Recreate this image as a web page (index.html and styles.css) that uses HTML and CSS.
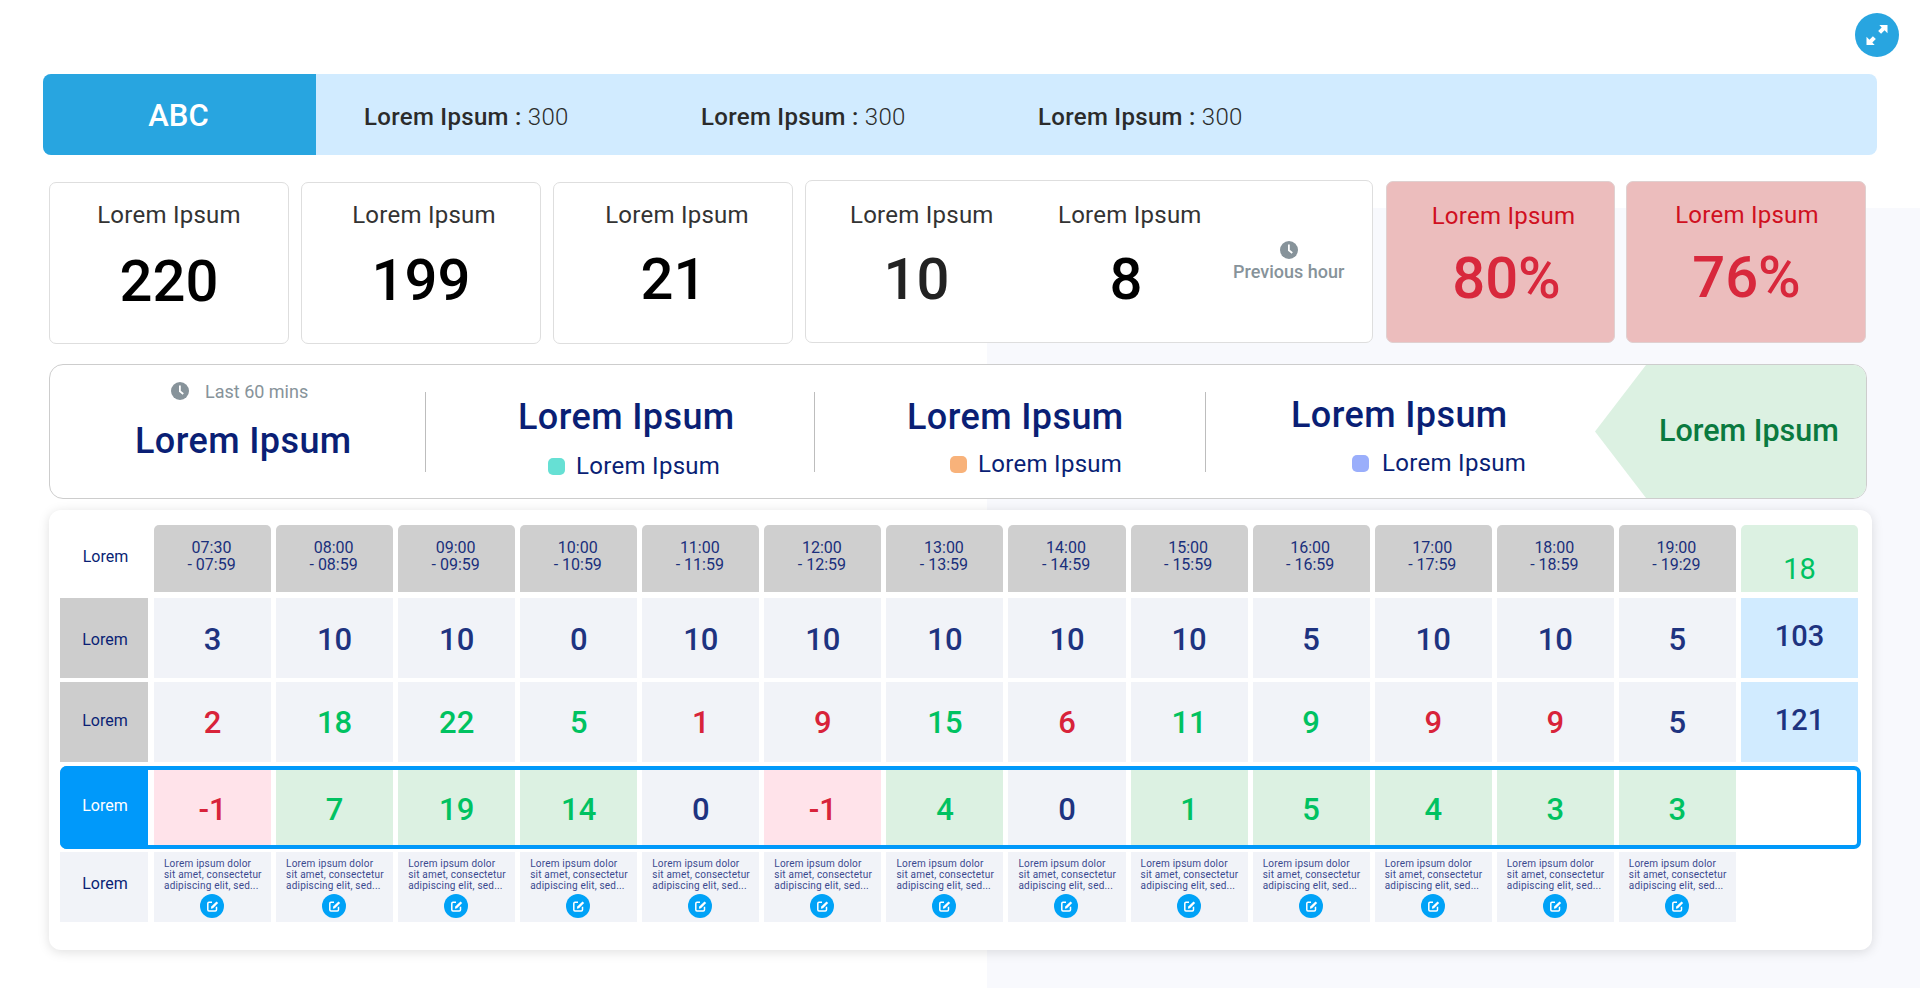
FILE: index.html
```html
<!DOCTYPE html>
<html lang="en">
<head>
<meta charset="utf-8">
<title>Dashboard</title>
<link rel="stylesheet" href="styles.css">
</head>
<body>
<svg class="defs" width="0" height="0" aria-hidden="true">
  <symbol id="clock" viewBox="0 0 16 16">
    <circle cx="8" cy="8" r="8" fill="#87939a"/>
    <path d="M7.9 3.2v5.1l3 2.3" fill="none" stroke="#fff" stroke-width="1.6"/>
  </symbol>
  <symbol id="edit" viewBox="0 0 24 24">
    <path d="M12 8.300H9a1.200 1.200 0 0 0-1.200 1.200v6.300A1.200 1.200 0 0 0 9 17h6.300a1.200 1.200 0 0 0 1.200-1.200v-3" fill="none" stroke="#fff" stroke-width="1.500"/>
    <path d="M11.300 12.600l5.200-5.200 1.700 1.700-5.200 5.200-2.100.4z" fill="#fff"/>
  </symbol>
</svg>
<button class="expand" type="button" aria-label="Expand">
  <svg viewBox="0 0 24 24" width="28" height="28"><path d="M14 3.500h7v7l-2.500-2.500-3 3-2.500-2.500 3-3zM10 20.500H3v-7l2.500 2.500 3-3 2.500 2.500-3 3z" fill="#fff"/></svg>
</button>
<main class="page">
  <header class="topbar">
    <div class="brand">ABC</div>
    <div class="stats">
      <p class="stat"><b>Lorem Ipsum :</b> 300</p>
      <p class="stat"><b>Lorem Ipsum :</b> 300</p>
      <p class="stat"><b>Lorem Ipsum :</b> 300</p>
    </div>
  </header>

  <section class="cards">
    <div class="card c1"><div class="lbl">Lorem Ipsum</div><div class="num">220</div></div>
    <div class="card c2"><div class="lbl">Lorem Ipsum</div><div class="num">199</div></div>
    <div class="card c3"><div class="lbl">Lorem Ipsum</div><div class="num">21</div></div>
    <div class="card wide">
      <div class="pair p1"><div class="lbl">Lorem Ipsum</div><div class="num dark">10</div></div>
      <div class="pair p2"><div class="lbl">Lorem Ipsum</div><div class="num">8</div></div>
      <div class="prev"><svg class="clk"><use href="#clock"/></svg><span>Previous hour</span></div>
    </div>
    <div class="card alert a1"><div class="lbl">Lorem Ipsum</div><div class="num">80%</div></div>
    <div class="card alert a2"><div class="lbl">Lorem Ipsum</div><div class="num">76%</div></div>
  </section>

  <section class="panel">
    <div class="seg s1">
      <div class="meta"><svg class="clk"><use href="#clock"/></svg><span>Last 60 mins</span></div>
      <div class="title">Lorem Ipsum</div>
    </div>
    <i class="rule"></i>
    <div class="seg s2">
      <div class="title">Lorem Ipsum</div>
      <div class="sub"><i class="dot teal"></i>Lorem Ipsum</div>
    </div>
    <i class="rule"></i>
    <div class="seg s3">
      <div class="title">Lorem Ipsum</div>
      <div class="sub"><i class="dot orange"></i>Lorem Ipsum</div>
    </div>
    <i class="rule"></i>
    <div class="seg s4">
      <div class="title">Lorem Ipsum</div>
      <div class="sub"><i class="dot blue"></i>Lorem Ipsum</div>
    </div>
    <div class="flag">Lorem Ipsum</div>
  </section>

  <section class="board">
    <div class="row r0">
      <div class="head-l">Lorem</div>
      <div class="time">07:30<br>- 07:59</div>
      <div class="time">08:00<br>- 08:59</div>
      <div class="time">09:00<br>- 09:59</div>
      <div class="time">10:00<br>- 10:59</div>
      <div class="time">11:00<br>- 11:59</div>
      <div class="time">12:00<br>- 12:59</div>
      <div class="time">13:00<br>- 13:59</div>
      <div class="time">14:00<br>- 14:59</div>
      <div class="time">15:00<br>- 15:59</div>
      <div class="time">16:00<br>- 16:59</div>
      <div class="time">17:00<br>- 17:59</div>
      <div class="time">18:00<br>- 18:59</div>
      <div class="time">19:00<br>- 19:29</div>
      <div class="tot-g">18</div>
    </div>
    <div class="row r1">
      <div class="side">Lorem</div>
      <div class="v">3</div><div class="v">10</div><div class="v">10</div><div class="v">0</div><div class="v">10</div><div class="v">10</div><div class="v">10</div><div class="v">10</div><div class="v">10</div><div class="v">5</div><div class="v">10</div><div class="v">10</div><div class="v">5</div>
      <div class="tot">103</div>
    </div>
    <div class="row r2">
      <div class="side">Lorem</div>
      <div class="v red">2</div><div class="v grn">18</div><div class="v grn">22</div><div class="v grn">5</div><div class="v red">1</div><div class="v red">9</div><div class="v grn">15</div><div class="v red">6</div><div class="v grn">11</div><div class="v grn">9</div><div class="v red">9</div><div class="v red">9</div><div class="v">5</div>
      <div class="tot">121</div>
    </div>
    <div class="row r3">
      <div class="side hot">Lorem</div>
      <div class="v red neg">-1</div><div class="v grn pos">7</div><div class="v grn pos">19</div><div class="v grn pos">14</div><div class="v">0</div><div class="v red neg">-1</div><div class="v grn pos">4</div><div class="v">0</div><div class="v grn pos">1</div><div class="v grn pos">5</div><div class="v grn pos">4</div><div class="v grn pos">3</div><div class="v grn pos">3</div>
      <div class="blank"></div>
    </div>
    <div class="row r4">
      <div class="side pale">Lorem</div>
      <div class="note"><p>Lorem ipsum dolor<br>sit amet, consectetur<br>adipiscing elit, sed...</p><span class="pen"><svg><use href="#edit"/></svg></span></div>
      <div class="note"><p>Lorem ipsum dolor<br>sit amet, consectetur<br>adipiscing elit, sed...</p><span class="pen"><svg><use href="#edit"/></svg></span></div>
      <div class="note"><p>Lorem ipsum dolor<br>sit amet, consectetur<br>adipiscing elit, sed...</p><span class="pen"><svg><use href="#edit"/></svg></span></div>
      <div class="note"><p>Lorem ipsum dolor<br>sit amet, consectetur<br>adipiscing elit, sed...</p><span class="pen"><svg><use href="#edit"/></svg></span></div>
      <div class="note"><p>Lorem ipsum dolor<br>sit amet, consectetur<br>adipiscing elit, sed...</p><span class="pen"><svg><use href="#edit"/></svg></span></div>
      <div class="note"><p>Lorem ipsum dolor<br>sit amet, consectetur<br>adipiscing elit, sed...</p><span class="pen"><svg><use href="#edit"/></svg></span></div>
      <div class="note"><p>Lorem ipsum dolor<br>sit amet, consectetur<br>adipiscing elit, sed...</p><span class="pen"><svg><use href="#edit"/></svg></span></div>
      <div class="note"><p>Lorem ipsum dolor<br>sit amet, consectetur<br>adipiscing elit, sed...</p><span class="pen"><svg><use href="#edit"/></svg></span></div>
      <div class="note"><p>Lorem ipsum dolor<br>sit amet, consectetur<br>adipiscing elit, sed...</p><span class="pen"><svg><use href="#edit"/></svg></span></div>
      <div class="note"><p>Lorem ipsum dolor<br>sit amet, consectetur<br>adipiscing elit, sed...</p><span class="pen"><svg><use href="#edit"/></svg></span></div>
      <div class="note"><p>Lorem ipsum dolor<br>sit amet, consectetur<br>adipiscing elit, sed...</p><span class="pen"><svg><use href="#edit"/></svg></span></div>
      <div class="note"><p>Lorem ipsum dolor<br>sit amet, consectetur<br>adipiscing elit, sed...</p><span class="pen"><svg><use href="#edit"/></svg></span></div>
      <div class="note"><p>Lorem ipsum dolor<br>sit amet, consectetur<br>adipiscing elit, sed...</p><span class="pen"><svg><use href="#edit"/></svg></span></div>
      <div class="blank"></div>
    </div>
  </section>
</main>
</body>
</html>
```
FILE: styles.css
```css
* { box-sizing: border-box; }
html, body { margin: 0; height: 100%; }
body {
  position: relative;
  background: #fff;
  font-family: Roboto, "Liberation Sans", sans-serif;
  color: #2b2b2b;
  overflow: hidden;
}
body::before {
  content: "";
  position: absolute;
  left: 987px;
  top: 208px;
  right: 0;
  bottom: 0;
  background: #f8f9fd;
}
.defs { position: absolute; }
.expand {
  position: absolute;
  left: 1855px;
  top: 13px;
  width: 44px;
  height: 44px;
  border: 0;
  border-radius: 50%;
  padding: 0;
  background: #28a5e0;
  display: flex;
  align-items: center;
  justify-content: center;
}
.page { position: relative; padding: 74px 0 0 43px; width: 1920px; }

.topbar {
  display: flex;
  width: 1834px;
  height: 81px;
  border-radius: 8px;
  background: #d1ebff;
  overflow: hidden;
}
.brand {
  width: 273px;
  background: #28a5e0;
  color: #fff;
  font-size: 31px;
  font-weight: 500;
  line-height: 83px;
  text-align: center;
  padding-right: 2px;
}
.stats { display: flex; padding-left: 48px; }
.stat { margin: 0; width: 337px; font-size: 24px; line-height: 86px; letter-spacing: .3px; font-weight: 300; }
.stat b { font-weight: 500; }

.cards { display: flex; align-items: flex-start; margin: 25px 0 0 6px; }
.card {
  width: 240px;
  height: 162px;
  margin-top: 2px;
  margin-right: 12px;
  border: 1px solid #dedede;
  border-radius: 7px;
  background: #fff;
  text-align: center;
  padding-top: 18px;
}
.lbl { font-size: 24px; line-height: 28px; letter-spacing: .25px; color: #333; white-space: nowrap; }
.num { font-size: 58px; line-height: 64px; margin-top: 20px; font-weight: 500; color: #000; }
.num.dark { color: #222; }
.c2 .lbl { padding-left: 6px; }
.c2 .num { margin-top: 19px; }
.c3 .lbl { padding-left: 8px; }
.c3 .num { margin-top: 18px; padding-left: 1px; }
.card.wide {
  width: 568px;
  height: 163px;
  margin-top: 0;
  margin-right: 13px;
  display: flex;
  padding: 20px 0 0 44px;
  text-align: center;
}
.pair { width: 143px; }
.p1 .num { margin-top: 18px; padding-right: 10px; }
.p2 { margin-left: 65px; }
.p2 .num { margin-top: 18px; padding-right: 7px; }
.prev {
  margin-left: 32px;
  width: 111px;
  padding-top: 40px;
  color: #87939a;
  font-size: 18px;
  font-weight: 500;
  line-height: 25px;
  white-space: nowrap;
}
.clk { width: 18px; height: 18px; display: block; flex: none; }
.prev .clk { margin: 0 auto; }
.card.alert {
  width: 229px;
  height: 162px;
  margin-top: 1px;
  margin-right: 11px;
  background: #ecbdbd;
  border-color: #e0d0d0;
  padding-top: 19px;
}
.alert .lbl { color: #d0101f; }
.alert .num { color: #d8283c; margin-top: 16px; }
.card.a1 { padding-top: 20px; }
.a1 .lbl { padding-left: 6px; }
.a1 .num { padding-left: 12px; }
.card.a2 { width: 240px; margin-right: 0; }
.a2 .lbl { padding-left: 2px; }
.a2 .num { padding-left: 1px; }

.panel {
  display: flex;
  width: 1818px;
  height: 135px;
  margin: 20px 0 0 6px;
  border: 1px solid #cdcdcd;
  border-radius: 14px;
  background: #fff;
  overflow: hidden;
}
.seg { color: #0a1f75; flex: none; }
.s1 { width: 375px; padding: 15px 0 0 85px; }
.s2 { width: 388px; padding: 32px 0 0 92px; }
.s3 { width: 390px; padding: 32px 0 0 92px; }
.s4 { width: 389px; padding: 30px 0 0 85px; }
.title { font-size: 36px; line-height: 40px; font-weight: 500; letter-spacing: .4px; white-space: nowrap; }
.meta {
  display: flex;
  align-items: center;
  gap: 16px;
  margin-left: 36px;
  height: 22px;
  color: #87939a;
  font-size: 18px;
}
.s1 .title { margin-top: 19px; }
.sub {
  display: flex;
  align-items: center;
  margin-top: 15px;
  height: 28px;
  font-size: 24px;
  letter-spacing: .3px;
  font-weight: 400;
  white-space: nowrap;
}
.s2 .sub { padding-left: 30px; gap: 11px; }
.s3 .sub { padding-left: 43px; gap: 11px; margin-top: 13px; }
.s4 .sub { padding-left: 61px; gap: 13px; margin-top: 14px; }
.dot { width: 17px; height: 17px; border-radius: 5px; flex: none; }
.teal { background: #66e0d4; }
.orange { background: #f8b27a; }
.blue { background: #9aaefb; }
.rule { flex: none; width: 1px; height: 80px; margin-top: 27px; background: #bdbdbd; }
.flag {
  flex: 1;
  background: #dcf1e2;
  clip-path: polygon(0 50%, 51px 0, 100% 0, 100% 100%, 51px 100%);
  color: #0a7a3f;
  font-size: 30.500px;
  font-weight: 500;
  line-height: 132px;
  padding-left: 64px;
  white-space: nowrap;
}

.board {
  width: 1823px;
  height: 440px;
  margin: 11px 0 0 6px;
  padding: 15px 14px 0 11px;
  border-radius: 12px;
  background: #fff;
  box-shadow: 0 2px 12px rgba(0, 0, 0, .13);
}
.row {
  display: grid;
  grid-template-columns: 89px repeat(14, minmax(0, 1fr));
  column-gap: 5px;
  width: 1798px;
  position: relative;
}
.r0 { height: 67px; }
.r1 { height: 80px; margin-top: 6px; }
.r2 { height: 80px; margin-top: 4px; }
.r3 { height: 83px; margin-top: 4px; }
.r3::after {
  content: "";
  position: absolute;
  left: 0;
  top: 0;
  right: -3px;
  bottom: 0;
  border: 4px solid #0099fa;
  border-radius: 7px;
  pointer-events: none;
}
.r4 { height: 70px; margin-top: 3px; }
.head-l, .side, .time, .v, .tot, .tot-g { display: flex; align-items: center; justify-content: center; text-align: center; }
.head-l { color: #0a1f75; font-size: 16px; padding: 0 0 5px 2px; }
.time {
  background: #cfcfcf;
  border-radius: 5px 5px 0 0;
  color: #1a2f7c;
  font-size: 16px;
  line-height: 17px;
  padding: 0 2px 6px 0;
}
.tot-g {
  background: #dcf1e2;
  border-radius: 5px 5px 0 0;
  color: #00c261;
  font-size: 29px;
  padding-top: 21px;
}
.side { background: #cdcdcd; color: #0a1f75; font-size: 16px; padding-left: 2px; margin-right: 1px; }
.r1 .side { padding-top: 2px; }
.r2 .side { padding-bottom: 4px; }
.side.hot { background: #0099fa; color: #fff; border-radius: 7px 0 0 7px; padding-bottom: 5px; }
.side.pale { background: #f1f3f8; padding: 0 0 7px 2px; }
.v {
  background: #f1f3f8;
  color: #1e3380;
  font-size: 31px;
  font-weight: 500;
}
.v.red { color: #d8233a; }
.v.grn { color: #00c261; }
.v.neg { background: #ffe3ea; }
.v.pos { background: #dcf1e2; }
.r1 .v { padding-top: 2px; }
.r3 .v { padding-top: 3px; }
.tot {
  background: #d1ebff;
  color: #1e3380;
  font-size: 29px;
  font-weight: 500;
  padding-bottom: 5px;
}
.note {
  background: #f1f3f8;
  padding: 6px 0 0 10px;
  text-align: center;
}
.note p {
  margin: 0;
  color: #3b4a8f;
  font-size: 10px;
  line-height: 11px;
  letter-spacing: .2px;
  text-align: left;
  white-space: nowrap;
}
.pen {
  display: block;
  width: 24px;
  height: 24px;
  margin: 3px 0 0 36px;
  border-radius: 50%;
  background: #00a2f7;
}
.pen svg { display: block; width: 24px; height: 24px; }
```
